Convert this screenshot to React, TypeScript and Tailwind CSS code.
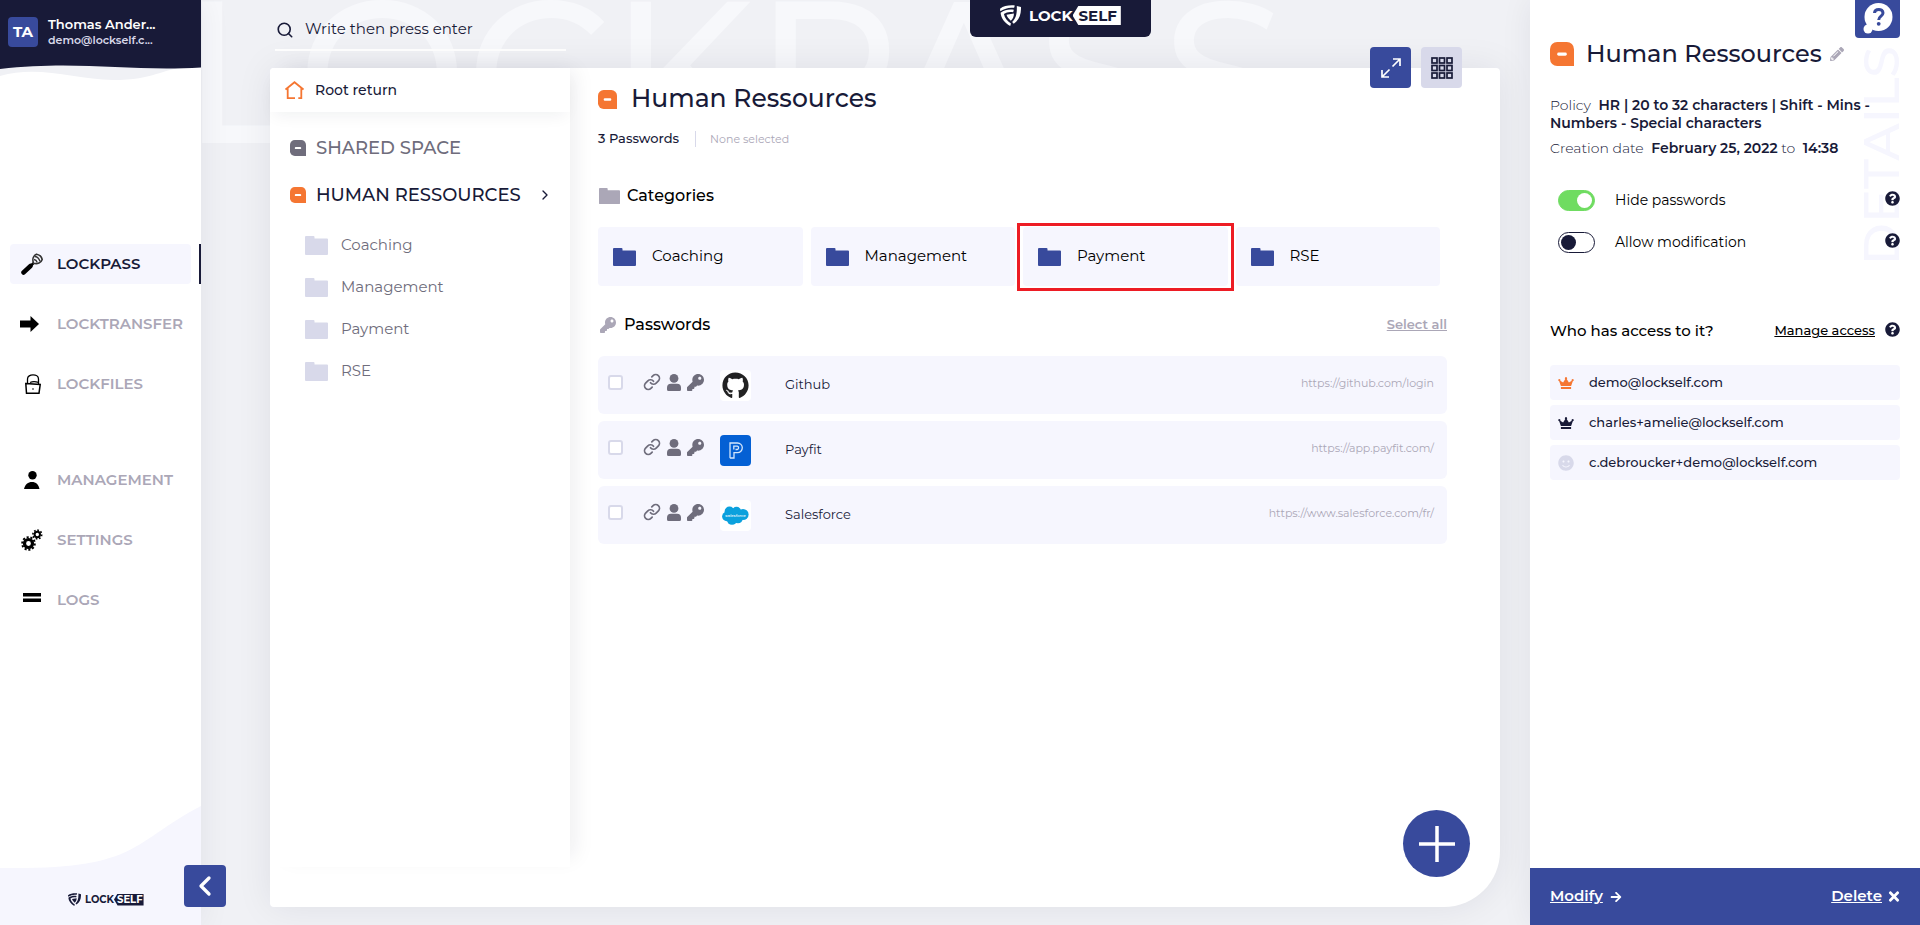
import { useState } from 'react';
import type { ReactNode } from 'react';
import { clsx } from 'clsx';
import { ChevronLeft, ChevronRight, Link as LinkIcon, Search } from 'lucide-react';
import { FaArrowRight, FaGithub, FaKey, FaPencilAlt, FaQuestionCircle, FaSmile, FaTimes } from 'react-icons/fa';

const categories = ['Coaching', 'Management', 'Payment', 'RSE'];

const passwords = [
  { name: 'Github', url: 'https://github.com/login', logo: <GithubLogo /> },
  { name: 'Payfit', url: 'https://app.payfit.com/', logo: <PayfitLogo /> },
  { name: 'Salesforce', url: 'https://www.salesforce.com/fr/', logo: <SalesforceLogo /> },
];

const members = [
  { email: 'demo@lockself.com', icon: <Crown className="h-3 w-4 text-[#f57632]" /> },
  { email: 'charles+amelie@lockself.com', icon: <Crown className="h-3 w-4 text-[#181a38]" /> },
  { email: 'c.debroucker+demo@lockself.com', icon: <FaSmile className="size-4 text-[#d8d9ea]" /> },
];

/* Icons */

function SpaceIcon({ className }: { className?: string }) {
  return (
    <svg viewBox="0 0 20 20" className={clsx('shrink-0', className)} aria-hidden="true">
      <path d="M6 0h8a6 6 0 0 1 6 6v14H6a6 6 0 0 1-6-6V6a6 6 0 0 1 6-6z" fill="currentColor" />
      <rect x="6" y="8.8" width="8" height="2.6" rx="1.2" fill="#fff" />
    </svg>
  );
}

function Folder({ className }: { className?: string }) {
  return (
    <svg viewBox="0 0 23 19" className={clsx('shrink-0', className)} preserveAspectRatio="none" aria-hidden="true">
      <path
        d="M1 0h7.500a1 1 0 0 1 1 1v1.600H22a1 1 0 0 1 1 1V18a1 1 0 0 1-1 1H1a1 1 0 0 1-1-1V1a1 1 0 0 1 1-1z"
        fill="currentColor"
      />
    </svg>
  );
}

function Crown({ className }: { className?: string }) {
  return (
    <svg viewBox="0 0 16 12" className={className} fill="currentColor" aria-hidden="true">
      <path d="M2.900 9 1.200 4.200a1.100 1.100 0 1 1 1-.4l2.900 1.700L7.300 2a1.100 1.100 0 1 1 1.400 0l2.200 3.500 2.900-1.700a1.100 1.100 0 1 1 1 .4L13.100 9z" />
      <rect x="2.900" y="10" width="10.200" height="2" />
    </svg>
  );
}

function Person({ className }: { className?: string }) {
  return (
    <svg viewBox="0 0 14 17" className={className} fill="currentColor" aria-hidden="true">
      <circle cx="7" cy="4.400" r="4.400" />
      <path d="M4 9.800h6a4 4 0 0 1 4 4v1.700a1.500 1.500 0 0 1-1.500 1.500h-11A1.500 1.500 0 0 1 0 15.500v-1.700a4 4 0 0 1 4-4z" />
    </svg>
  );
}

function Home({ className }: { className?: string }) {
  return (
    <svg viewBox="0 0 19 18" className={className} fill="none" stroke="currentColor" strokeWidth="1.800" aria-hidden="true">
      <path d="M.5 8.600 9.500 1.200l9 7.400M2.700 7v10.100H10M16.300 7v10.100h-3" />
    </svg>
  );
}

function PassKey() {
  return (
    <svg viewBox="0 0 22 22" className="size-[22px]" fill="none" stroke="#000" aria-hidden="true">
      <path d="m2.500 19.500 7-6.500" strokeWidth="4.500" strokeLinecap="round" />
      <path d="m9.500 13 3-2.800" strokeWidth="2.500" />
      <path d="M12.500 10.200C11 6 12.500 2.500 15.500 1.200c2.500.4 5 2.300 5.700 5.300-1 3.200-4.700 5-8.700 3.700z" strokeWidth="1.600" stroke="#333" />
      <path d="M13.500 3.500c2.500 0 4.500 2 5.500 4.700M13 6.500c1.800.2 2.700 1.300 3.300 3" strokeWidth="1.300" stroke="#333" />
    </svg>
  );
}

function TransferArrow() {
  return (
    <svg viewBox="0 0 19 16" className="-ml-1.5 h-4 w-[19px]" aria-hidden="true">
      <path d="M0 4.500h10.500V0L19 8l-8.500 8v-4.500H0z" />
    </svg>
  );
}

function Padlock() {
  return (
    <svg viewBox="0 0 16 20" className="ml-0.5 h-5 w-4" fill="none" stroke="#000" strokeWidth="1.300" aria-hidden="true">
      <path d="M2.500 9V5C2.500-.5 13.500-.5 13.500 5v5M5 8.500c2-1 6-1 8.500 0" />
      <path d="M.8 9.500 15.200 10.500 14 19.200H1.500z" strokeWidth="1.500" />
      <circle cx="8" cy="15" r=".8" fill="#000" stroke="none" />
    </svg>
  );
}

function ManagerIcon() {
  return (
    <svg viewBox="0 0 16 18" className="h-[18px] w-4" aria-hidden="true">
      <circle cx="8.500" cy="4.300" r="4.200" />
      <path d="M0 18c1-4.500 4-7 8-7s6.500 2.500 7.500 7z" />
    </svg>
  );
}

// Each cog is a solid ring with a dashed ring around it for the teeth
function CogsIcon() {
  return (
    <svg viewBox="0 0 22 22" className="size-[22px]" fill="none" stroke="#000" aria-hidden="true">
      <circle cx="7.500" cy="14.500" r="4" strokeWidth="3.200" />
      <circle cx="7.500" cy="14.500" r="6.300" strokeWidth="2" pathLength="100" strokeDasharray="5.500 4.500" />
      <circle cx="16.300" cy="5.500" r="2.700" strokeWidth="2" />
      <circle cx="16.300" cy="5.500" r="4.400" strokeWidth="1.600" pathLength="80" strokeDasharray="5 5" />
    </svg>
  );
}

function LogsIcon() {
  return (
    <svg viewBox="0 0 18 9" className="mb-1.5 h-[9px] w-[18px]" aria-hidden="true">
      <path d="M0 0h18v3.500H0zM0 5.500h18V9H0z" />
    </svg>
  );
}

function Shield({ className }: { className?: string }) {
  return (
    <svg viewBox="0 0 22 22" className={className} fill="currentColor" aria-hidden="true">
      <path d="M0 3.800C4 .8 9 0 15.500.4L14.800 3C9.500 2.200 5.500 3.400.3 6.500z" />
      <path d="M.6 8C5 5 9.500 4.300 14.500 5l-.7 2.500c-4-.7-7 0-9.700 1.800.8 4 3.300 7.200 7.400 10.200L10.700 22C4.500 18 1.200 14 .6 8z" />
      <path d="M17.600 1 22 2.200c.2 8-1.800 13.300-7.600 17.400l-1.700-1.800c4.200-3.800 5.200-8.800 4.900-16.800z" />
      <path d="m6.800 10.300 7.800-1.500c0 3-1 5.500-3.300 7.600-2-1.600-3.700-3.600-4.500-6.100z" />
    </svg>
  );
}

function GithubLogo() {
  return (
    <span className="flex size-[31px] items-center justify-center rounded-sm bg-white">
      <FaGithub className="size-[27px] text-[#222]" />
    </span>
  );
}

function PayfitLogo() {
  return (
    <span className="flex size-[31px] items-center justify-center rounded-sm bg-[#0460d4]">
      <svg viewBox="0 0 15 17" className="ml-px h-[17px] w-[15px]" fill="none" stroke="#d5e6fb" strokeWidth="1.300" aria-hidden="true">
        <path d="M1 1h7.500a4.800 4.800 0 0 1 0 9.600H5V16H1.500L1 15.500z" />
        <path d="M4.800 7.500V4.200h3.500a1.700 1.700 0 0 1 0 3.300H6.500" />
      </svg>
    </span>
  );
}

function SalesforceLogo() {
  return (
    <span className="flex size-[31px] items-center justify-center rounded-sm bg-white">
      <svg viewBox="0 0 27 19" className="h-[19px] w-[27px]" aria-hidden="true">
        <g fill="#0ba1dd">
          <circle cx="7.500" cy="5.500" r="4.900" />
          <circle cx="14.500" cy="5.500" r="4.700" />
          <circle cx="21" cy="8.500" r="5.600" />
          <circle cx="4.800" cy="10.500" r="4.700" />
          <circle cx="10" cy="13.500" r="5.200" />
          <circle cx="16" cy="12.500" r="4.800" />
        </g>
        <text x="13.500" y="11" textAnchor="middle" fontSize="4" fontStyle="italic" fontWeight="500" fill="#fff">
          salesforce
        </text>
      </svg>
    </span>
  );
}

/* Shared pieces */

function Logo({ small, inverted }: { small?: boolean; inverted?: boolean }) {
  return (
    <div
      className={clsx(
        'flex items-center font-bold leading-none',
        small ? 'text-[10px]' : 'text-[15px]',
        inverted ? 'text-white' : 'text-[#181a38]',
      )}
    >
      <Shield className={small ? 'mr-1 size-[13px]' : 'mr-2 size-[21px]'} />
      <span>LOCK</span>
      <span
        className={clsx(
          '[clip-path:polygon(12%_0,100%_0,100%_100%,12%_100%,0_50%)]',
          small ? 'py-px pr-px pl-[3px]' : 'py-0.5 pr-1 pl-1.5',
          inverted ? 'bg-white text-[#181a38]' : 'bg-[#181a38] text-white',
        )}
      >
        SELF
      </span>
    </div>
  );
}

type NavItemProps = { icon: ReactNode; label: string; active?: boolean };

function NavItem({ icon, label, active }: NavItemProps) {
  return (
    <a
      href="#"
      className={clsx(
        'relative ml-[10px] flex h-10 items-center border-r-2',
        active ? 'border-[#181a38] text-[#181a38]' : 'border-transparent text-[#aba7b7]',
      )}
    >
      <span className={clsx('mr-2 flex h-full flex-1 items-center rounded', active && 'bg-[#f6f6fe]')}>
        <span className="ml-2.5 flex w-6 items-center justify-center">{icon}</span>
        <span className="ml-[13px] text-[15px] font-semibold">{label}</span>
      </span>
    </a>
  );
}

function Help({ label }: { label: string }) {
  return (
    <button type="button" aria-label={label} className="mb-1">
      <FaQuestionCircle className="size-[15px] text-[#181a38]" />
    </button>
  );
}

function Toggle({ label, defaultChecked }: { label: string; defaultChecked?: boolean }) {
  return (
    <div className="flex h-[42px] items-center justify-between">
      <label className="ml-2 flex items-center gap-5 text-sm text-black">
        <input
          type="checkbox"
          role="switch"
          defaultChecked={defaultChecked}
          className="h-[21px] w-[37px] appearance-none rounded-full border border-[#181a38] bg-white p-0.5 before:block before:size-[15px] before:rounded-full before:bg-[#181a38] checked:border-[#6fdc61] checked:bg-[#6fdc61] checked:before:ml-4 checked:before:bg-white"
        />
        {label}
      </label>
      <Help label={`About ${label}`} />
    </div>
  );
}

/* Page sections */

function Sidebar() {
  return (
    <aside className="relative z-10 flex w-[201px] shrink-0 flex-col bg-white shadow-[0_0_30px_rgba(24,26,56,0.07)]">
      <header className="h-[80px]">
        <div className="flex h-16 items-center bg-[#181a38] pl-2">
          <span className="flex size-[30px] items-center justify-center rounded bg-[#384a9c] text-[15px] font-bold text-white">
            TA
          </span>
          <div className="ml-2.5 text-white">
            <p className="text-[13px] leading-4 font-semibold">Thomas Ander...</p>
            <p className="text-[11px] leading-4 font-semibold text-[#d8d9ea]">demo@lockself.c...</p>
          </div>
        </div>
        <svg viewBox="0 0 201 16" preserveAspectRatio="none" className="block h-4 w-full" aria-hidden="true">
          <path d="M0 0h201v1C160 4 160 14 120 16 80 17 40 0 0 12z" fill="#f0f1f5" />
          <path d="M0 0h201v3.500C130 8 80-4 0 5z" fill="#181a38" />
        </svg>
      </header>

      <nav className="mt-[164px] flex flex-col gap-5">
        <NavItem icon={<PassKey />} label="LOCKPASS" active />
        <NavItem icon={<TransferArrow />} label="LOCKTRANSFER" />
        <NavItem icon={<Padlock />} label="LOCKFILES" />
        <div className="mt-9 flex flex-col gap-5">
          <NavItem icon={<ManagerIcon />} label="MANAGEMENT" />
          <NavItem icon={<CogsIcon />} label="SETTINGS" />
          <NavItem icon={<LogsIcon />} label="LOGS" />
        </div>
      </nav>

      <div className="relative mt-auto h-[119px]">
        <svg viewBox="0 0 201 119" preserveAspectRatio="none" className="absolute inset-0 size-full" aria-hidden="true">
          <path d="M0 62c140 2 130-25 201-62v119H0z" fill="#f6f6fe" />
        </svg>
        <div className="absolute bottom-[19px] left-[68px]">
          <Logo small />
        </div>
        <button
          type="button"
          aria-label="Collapse menu"
          className="absolute -right-[25px] bottom-[18px] flex size-[42px] items-center justify-center rounded bg-[#384a9c] text-white"
        >
          <ChevronLeft className="size-8" strokeWidth={2.5} />
        </button>
      </div>
    </aside>
  );
}

function SpaceTree() {
  return (
    <div className="mb-10 w-[300px] shrink-0 rounded-tl bg-white shadow-[10px_-4px_20px_-6px_rgba(24,26,56,0.08)]">
      <a
        href="#"
        className="flex h-11 items-center rounded-tl pl-[15px] text-sm font-medium text-[#181a38] shadow-[0_8px_16px_-4px_rgba(24,26,56,0.06)]"
      >
        <Home className="mr-[11px] h-[18px] w-[19px] text-[#f57632]" />
        Root return
      </a>
      <div className="pt-3 pl-5 text-lg font-medium">
        <a href="#" className="flex h-[47px] items-center text-[#6f6d7c]">
          <SpaceIcon className="mr-2.5 size-4" />
          SHARED SPACE
        </a>
        <a href="#" className="flex h-[47px] items-center text-[#181a38]">
          <SpaceIcon className="mr-2.5 size-4 text-[#f57632]" />
          HUMAN RESSOURCES
          <ChevronRight className="mr-[17px] ml-auto size-4" />
        </a>
      </div>
      <ul className="pt-1.5 pl-[35px] text-[15px] text-[#6f6d7c]">
        {categories.map((name) => (
          <li key={name}>
            <a href="#" className="flex h-[42px] items-center">
              <Folder className="mr-[13px] h-[19px] w-[23px] text-[#d8d9ea]" />
              {name}
            </a>
          </li>
        ))}
      </ul>
    </div>
  );
}

function Content() {
  const [selected, setSelected] = useState<string[]>([]);

  const toggle = (name: string) =>
    setSelected((prev) => (prev.includes(name) ? prev.filter((n) => n !== name) : [...prev, name]));

  return (
    <section className="min-w-0 flex-1 pt-[13px] pr-[53px] pl-7 text-black">
      <h1 className="flex h-9 items-center gap-[14px] text-[25px] font-medium text-[#181a38]">
        <SpaceIcon className="size-[19px] text-[#f57632]" />
        Human Ressources
      </h1>
      <div className="mt-3.5 flex h-4 items-center text-[#181a38]">
        <span className="text-[13px] font-medium">3 Passwords</span>
        <span className="ml-4 border-l border-[#d8d9ea] pl-3.5 text-[11px] leading-4 text-[#aba7b7]">
          {selected.length ? `${selected.length} selected` : 'None selected'}
        </span>
      </div>

      <h2 className="mt-[37px] flex h-6 items-center gap-[7px] text-base font-medium">
        <Folder className="ml-px h-4 w-[21px] text-[#aba7b7]" />
        Categories
      </h2>
      <div className="mt-[19px] mr-[7px] grid grid-cols-4 gap-2">
        {categories.map((name) => (
          <a
            key={name}
            href="#"
            className="relative flex h-[59px] items-center rounded bg-[#f6f6fe] pl-[15px] text-[15px]"
          >
            <Folder className="mr-4 h-[18px] w-[23px] text-[#384a9c]" />
            {name}
            {name === 'Payment' && (
              <span className="pointer-events-none absolute -inset-x-1.5 -top-1 -bottom-[5px] z-10 border-3 border-[#ed1c24]" />
            )}
          </a>
        ))}
      </div>

      <div className="mt-[27px] flex h-6 items-center justify-between">
        <h2 className="flex items-center gap-2 text-base font-medium">
          <FaKey className="ml-0.5 size-4 text-[#aba7b7]" />
          Passwords
        </h2>
        <button
          type="button"
          onClick={() => setSelected(passwords.map((p) => p.name))}
          className="text-[13px] font-semibold text-[#aba7b7] underline"
        >
          Select all
        </button>
      </div>
      <ul className="mt-[19px] flex flex-col gap-[7px]">
        {passwords.map(({ name, url, logo }) => (
          <li key={name} className="flex h-[58px] items-center rounded-md bg-[#f6f6fe] pr-[13px] pl-2.5">
            <input
              type="checkbox"
              aria-label={`Select ${name}`}
              checked={selected.includes(name)}
              onChange={() => toggle(name)}
              className="mb-1.5 size-[15px] appearance-none rounded-[3px] border-2 border-[#d8d9ea] bg-white checked:bg-[#384a9c]"
            />
            <span className="mb-1.5 ml-5 flex items-center gap-1.5 text-[#6f6d7c]">
              <LinkIcon className="size-[18px]" strokeWidth={2.3} />
              <Person className="h-[17px] w-[14px]" />
              <FaKey className="size-[17px]" />
            </span>
            <span className="ml-4">{logo}</span>
            <span className="ml-[34px] text-[13px] text-[#181a38]">{name}</span>
            <a href={url} className="mb-1 ml-auto text-[11px] text-[#aba7b7]">
              {url}
            </a>
          </li>
        ))}
      </ul>
    </section>
  );
}

function Main() {
  return (
    <main className="relative flex min-w-0 flex-1 flex-col overflow-hidden bg-[#f0f1f5] pr-[30px] pb-[18px] pl-[69px]">
      <div
        aria-hidden="true"
        className="pointer-events-none absolute top-0 -left-5 text-[201px] leading-[142px] font-medium whitespace-nowrap text-[#f7f8fb] select-none"
      >
        LOCKPASS
      </div>
      <div className="absolute top-0 left-[769px] rounded-b-md bg-[#181a38] px-[30px] pt-[5px] pb-[11px]">
        <Logo inverted />
      </div>

      <div className="relative h-[68px]">
        <label className="ml-[5px] flex h-[51px] w-[291px] items-center border-b-2 border-white pt-2.5">
          <Search className="mr-[11px] ml-px size-5 text-[#181a38]" strokeWidth={2.2} />
          <input
            type="text"
            aria-label="Search"
            placeholder="Write then press enter"
            className="w-full bg-transparent text-[15px] text-[#181a38] outline-none placeholder:text-[#181a38]"
          />
        </label>
      </div>

      <div className="relative flex flex-1 rounded-sm rounded-br-[56px] bg-white shadow-[0_0_36px_rgba(24,26,56,0.08)]">
        <SpaceTree />
        <Content />

        <div className="absolute -top-[21px] right-[38px] flex gap-2.5">
          <button
            type="button"
            aria-label="Expand"
            className="flex size-[41px] items-center justify-center rounded-sm bg-[#384a9c] text-white"
          >
            <svg viewBox="0 0 20 20" className="size-5" fill="none" stroke="currentColor" strokeWidth="1.700" aria-hidden="true">
              <path d="M12 1h7v7M19 1l-7.500 7.500M8 19H1v-7M1 19l7.500-7.500" />
            </svg>
          </button>
          <button
            type="button"
            aria-label="Grid view"
            className="flex size-[41px] items-center justify-center rounded-sm bg-[#d8d9ea] text-[#181a38]"
          >
            <svg viewBox="0 0 22 22" className="size-[22px]" fill="none" stroke="currentColor" strokeWidth="1.700" aria-hidden="true">
              {[1, 8.5, 16].map((y) =>
                [1, 8.5, 16].map((x) => <rect key={`${x}-${y}`} x={x} y={y} width="5" height="5" />),
              )}
            </svg>
          </button>
        </div>

        <button
          type="button"
          aria-label="Add"
          className="absolute right-[30px] bottom-[30px] flex size-[67px] items-center justify-center rounded-full bg-[#384a9c] text-white"
        >
          <svg viewBox="0 0 36 36" className="size-9" stroke="currentColor" strokeWidth="3.500" aria-hidden="true">
            <path d="M18 0v36M0 18h36" />
          </svg>
        </button>
      </div>
    </main>
  );
}

function Details() {
  return (
    <aside className="relative z-10 flex w-[390px] shrink-0 flex-col bg-white shadow-[0_0_30px_rgba(24,26,56,0.07)]">
      <div
        aria-hidden="true"
        className="pointer-events-none absolute top-[46px] right-[9px] rotate-180 text-[51px] leading-[60px] font-medium text-[#f6f6fe] select-none [writing-mode:vertical-rl]"
      >
        DETAILS
      </div>
      <button
        type="button"
        aria-label="Help"
        className="absolute top-0 right-5 flex h-[38px] w-[45px] items-center justify-center rounded-b bg-[#384a9c]"
      >
        <svg viewBox="0 0 30 31" className="mb-0.5 h-[31px] w-[30px]" aria-hidden="true">
          <circle cx="15.500" cy="14" r="14" fill="#fff" />
          <circle cx="5" cy="26" r="4.500" fill="#fff" />
          <path d="M11.500 10c.3-4.800 8.500-4.800 8.500 0 0 3.200-4.300 3.200-4.300 7" fill="none" stroke="#384a9c" strokeWidth="3" />
          <circle cx="15.700" cy="20.800" r="1.900" fill="#384a9c" />
        </svg>
      </button>

      <div className="relative px-5 pt-9 text-[#181a38]">
        <div className="flex h-9 items-center">
          <SpaceIcon className="mr-3 size-6 text-[#f57632]" />
          <h2 className="text-2xl font-medium">Human Ressources</h2>
          <button type="button" aria-label="Rename" className="ml-2">
            <FaPencilAlt className="size-[14px] text-[#aba7b7]" />
          </button>
        </div>

        <p className="mt-6 pr-5 text-sm leading-[18px] font-light">
          Policy <span className="ml-1 font-semibold">HR | 20 to 32 characters | Shift - Mins - Numbers - Special characters</span>
        </p>
        <p className="mt-[7px] text-sm leading-[18px] font-light">
          Creation date <span className="ml-1 font-semibold">February 25, 2022</span> to{' '}
          <span className="ml-1 font-semibold">14:38</span>
        </p>

        <div className="mt-[22px]">
          <Toggle label="Hide passwords" defaultChecked />
          <Toggle label="Allow modification" />
        </div>

        <div className="mt-14 flex h-6 items-center text-black">
          <h3 className="text-[15px] font-medium">Who has access to it?</h3>
          <a href="#" className="mr-2.5 ml-auto text-[13px] font-medium underline">
            Manage access
          </a>
          <Help label="About access" />
        </div>
        <ul className="mt-[22px] flex flex-col gap-[5px]">
          {members.map(({ email, icon }) => (
            <li key={email} className="flex h-[35px] items-center gap-[15px] rounded bg-[#f6f6fe] pl-2 text-[13px] font-medium">
              {icon}
              {email}
            </li>
          ))}
        </ul>
      </div>

      <footer className="mt-auto flex h-[57px] items-center justify-between bg-[#384a9c] px-5 text-[15px] font-semibold text-white">
        <button type="button" className="flex items-center gap-[7px]">
          <span className="underline">Modify</span>
          <FaArrowRight className="size-3" />
        </button>
        <button type="button" className="flex items-center gap-1.5">
          <span className="underline">Delete</span>
          <FaTimes className="h-[15px] w-3" />
        </button>
      </footer>
    </aside>
  );
}

export default function App() {
  return (
    <div className="flex min-h-screen font-[Montserrat,Inter,'Open_Sans',sans-serif]">
      <Sidebar />
      <Main />
      <Details />
    </div>
  );
}
